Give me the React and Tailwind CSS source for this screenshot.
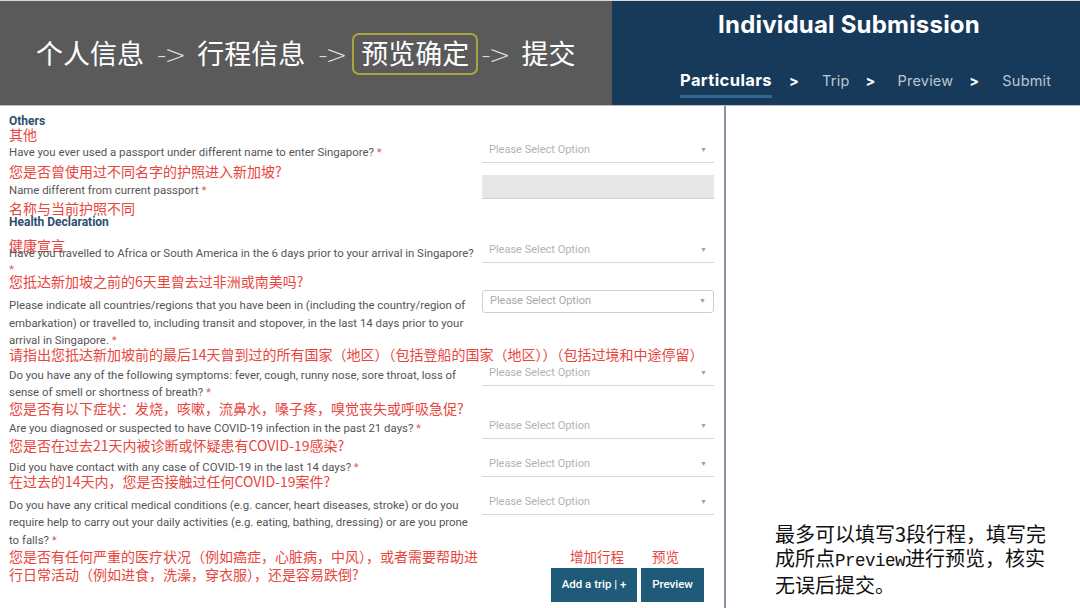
const EN = { fontFamily: "Roboto, 'Liberation Sans', sans-serif" };
const CN = { fontFamily: "'Noto Sans CJK SC', sans-serif" };

function Select({ className = "" }) {
  return (
    <div className={`h-[24px] border-b border-[#d6d6d6] flex items-center justify-between pl-[7px] pr-[7px] ${className}`}>
      <span className="text-[11px] text-[#b3b3b3]" style={EN}>Please Select Option</span>
      <span className="text-[7px] text-[#a0a0a0]">▼</span>
    </div>
  );
}

function Q({ children, className = "" }) {
  return (
    <p className={`text-[11.4px] leading-[17.5px] text-[#555] whitespace-nowrap ${className}`} style={EN}>
      {children}
    </p>
  );
}

function Star() {
  return <span className="text-[#e05a50]"> *</span>;
}

function Cn({ children, className = "" }) {
  return (
    <p className={`text-[14px] leading-[18px] text-[#e8453d] whitespace-nowrap ${className}`} style={CN}>
      {children}
    </p>
  );
}

function Arrow() {
  return (
    <span className="text-[26px] text-[#dcdcdc] font-light tracking-[-2px]" style={{ fontFamily: "'DejaVu Sans', sans-serif" }}>
      -&gt;
    </span>
  );
}

export default function App() {
  return (
    <div className="w-[1080px] h-[608px] bg-white overflow-hidden flex flex-col">
      {/* header */}
      <div className="h-[106px] flex border-t border-[#d8d8d8] border-b border-b-[#bcbcbc]">
        <div className="w-[612px] bg-[#5a5a5a] flex items-center pl-[36px] pt-[1px] text-white text-[27px]" style={CN}>
          <span>个人信息</span>
          <span className="ml-[13px] mr-[13px]"><Arrow /></span>
          <span>行程信息</span>
          <span className="ml-[13px] mr-[7px]"><Arrow /></span>
          <span className="border-2 border-[#a8a63c] rounded-[7px] px-[7px] h-[42px] flex items-center">预览确定</span>
          <span className="ml-[3px] mr-[13px]"><Arrow /></span>
          <span>提交</span>
        </div>
        <div className="flex-1 bg-[#173a5a] flex flex-col" style={{ fontFamily: "Inter, 'Liberation Sans', sans-serif" }}>
          <h1 className="text-white text-[24px] font-bold text-center mt-[9px] leading-[30px] pl-[6px] tracking-[0.2px]">Individual Submission</h1>
          <div className="flex items-center mt-[28px] pl-[68px] text-[14.5px] text-[#b9c6d2] tracking-[0.2px]">
            <div className="relative">
              <span className="text-white font-bold text-[16.5px] tracking-[0.4px]">Particulars</span>
              <div className="absolute left-0 right-0 -bottom-[5px] h-[3px] bg-[#2d6a8c]" />
            </div>
            <span className="ml-[17px] mr-[23px] text-white font-bold">&gt;</span>
            <span>Trip</span>
            <span className="ml-[16px] mr-[22px] text-white font-bold">&gt;</span>
            <span>Preview</span>
            <span className="ml-[16px] mr-[23px] text-white font-bold">&gt;</span>
            <span>Submit</span>
          </div>
        </div>
      </div>

      {/* body */}
      <div className="flex flex-1">
        <div className="w-[726px] border-r-2 border-[#8793a0] flex">
          <div className="w-[482px] pl-[9px]">
            <p className="mt-[8px] text-[12px] leading-[14px] font-bold text-[#2b4f6e]" style={EN}>Others</p>
            <p className="-mt-[1px] text-[14px] leading-[14px] text-[#e8453d]" style={CN}>其他</p>
            <Q className="mt-[3px]">Have you ever used a passport under different name to enter Singapore?<Star /></Q>
            <Cn>您是否曾使用过不同名字的护照进入新加坡?</Cn>
            <Q className="mt-[2px]">Name different from current passport<Star /></Q>
            <Cn>名称与当前护照不同</Cn>
            <p className="-mt-[2px] text-[12px] leading-[14px] font-bold text-[#2b4f6e]" style={EN}>Health Declaration</p>
            <Cn className="mt-[7px]">健康宣言</Cn>
            <p className="-mt-[9px] text-[11.4px] leading-[16px] text-[#555] whitespace-nowrap" style={EN}>
              Have you travelled to Africa or South America in the 6 days prior to your arrival in Singapore?<br />
              <span className="text-[#e05a50]">*</span>
            </p>
            <Cn className="-mt-[5px]">您抵达新加坡之前的6天里曾去过非洲或南美吗?</Cn>
            <Q className="mt-[7px]">
              Please indicate all countries/regions that you have been in (including the country/region of<br />
              embarkation) or travelled to, including transit and stopover, in the last 14 days prior to your<br />
              arrival in Singapore.<Star />
            </Q>
            <Cn className="-mt-[5px]">请指出您抵达新加坡前的最后14天曾到过的所有国家（地区）（包括登船的国家（地区））（包括过境和中途停留）</Cn>
            <Q className="mt-[4px]">
              Do you have any of the following symptoms: fever, cough, runny nose, sore throat, loss of<br />
              sense of smell or shortness of breath?<Star />
            </Q>
            <Cn className="-mt-[3px]">您是否有以下症状：发烧，咳嗽，流鼻水，嗓子疼，嗅觉丧失或呼吸急促?</Cn>
            <Q className="mt-[3px]">Are you diagnosed or suspected to have COVID-19 infection in the past 21 days?<Star /></Q>
            <Cn className="-mt-[1px]">您是否在过去21天内被诊断或怀疑患有COVID-19感染?</Cn>
            <Q className="mt-[5px]">Did you have contact with any case of COVID-19 in the last 14 days?<Star /></Q>
            <Cn className="-mt-[5px]">在过去的14天内，您是否接触过任何COVID-19案件?</Cn>
            <Q className="mt-[7px]">
              Do you have any critical medical conditions (e.g. cancer, heart diseases, stroke) or do you<br />
              require help to carry out your daily activities (e.g. eating, bathing, dressing) or are you prone<br />
              to falls?<Star />
            </Q>
            <Cn className="-mt-[2px]">
              您是否有任何严重的医疗状况（例如癌症，心脏病，中风），或者需要帮助进<br />
              行日常活动（例如进食，洗澡，穿衣服），还是容易跌倒?
            </Cn>
          </div>

          <div className="w-[232px] flex flex-col">
            <Select className="mt-[33px]" />
            <div className="mt-[12px] h-[24px] bg-[#e7e7e7] border-b border-[#d2d2d2]" />
            <Select className="mt-[40px]" />
            <div className="mt-[27px] h-[23px] border border-[#cfcfcf] rounded-[3px] flex items-center justify-between pl-[7px] pr-[7px]">
              <span className="text-[11px] text-[#a8a8a8]" style={EN}>Please Select Option</span>
              <span className="text-[7px] text-[#a0a0a0]">▼</span>
            </div>
            <Select className="mt-[49px]" />
            <Select className="mt-[29px]" />
            <Select className="mt-[14px]" />
            <Select className="mt-[14px]" />
            <div className="mt-[32px] flex text-[13.5px] leading-[18px] text-[#e8453d]" style={CN}>
              <span className="ml-[88px]">增加行程</span>
              <span className="ml-[28px]">预览</span>
            </div>
            <div className="mt-[3px] flex gap-[4px] ml-[69px]">
              <button className="w-[86px] h-[34px] bg-[#1f5a78] text-white text-[11.5px] font-medium" style={EN}>Add a trip | +</button>
              <button className="w-[63px] h-[34px] bg-[#1f5a78] text-white text-[11.5px] font-medium" style={EN}>Preview</button>
            </div>
          </div>
        </div>

        <div className="flex-1 flex flex-col justify-end pl-[49px] pb-[11px]">
          <p className="text-[20px] leading-[24px] text-[#111]" style={CN}>
            最多可以填写3段行程，填写完<br />
            成所点<span className="text-[17.5px] tracking-[-0.5px]" style={{ fontFamily: "'Liberation Mono', monospace" }}>Preview</span>进行预览，核实<br />
            无误后提交。
          </p>
        </div>
      </div>
    </div>
  );
}
